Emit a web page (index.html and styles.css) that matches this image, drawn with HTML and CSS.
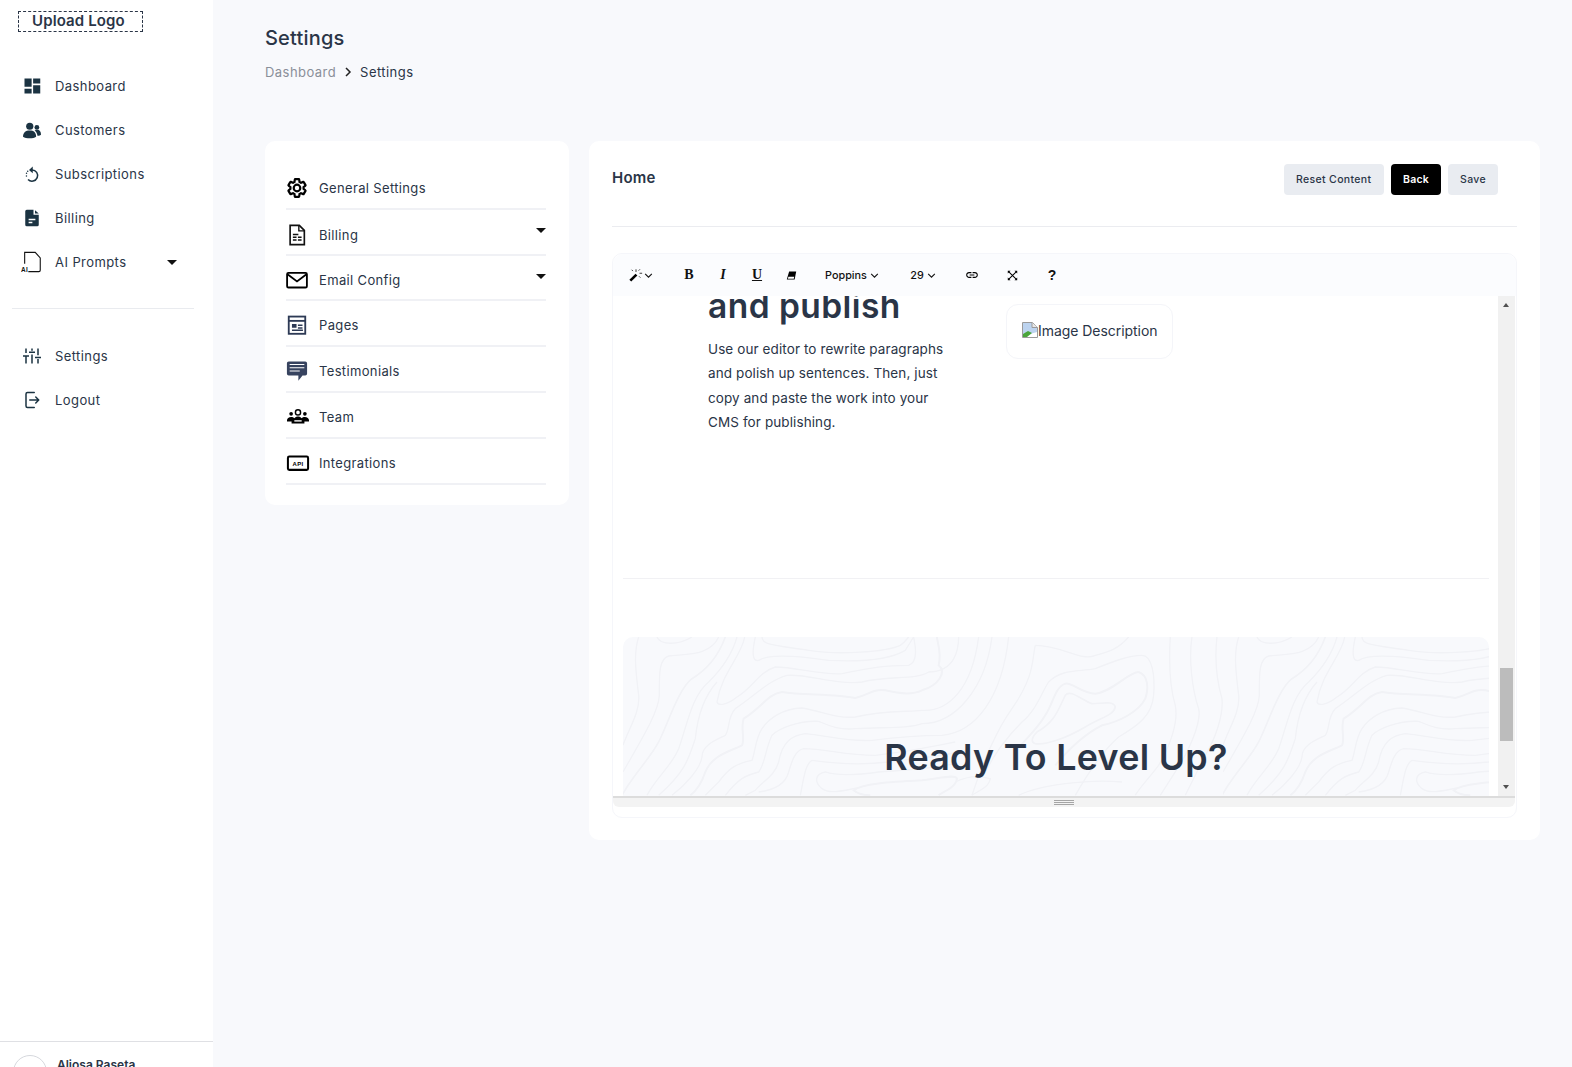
FILE: index.html
```html
<!DOCTYPE html>
<html lang="en">
<head>
<meta charset="utf-8">
<title>Settings</title>
<link rel="stylesheet" href="styles.css">
</head>
<body>
<div class="app">
  <aside class="sidebar">
    <div class="logo">Upload Logo</div>
    <nav class="nav">
      <a class="nav-item"><svg class="nav-icon" viewBox="0 0 24 24"><path fill="#1b3342" d="M2 13h9.500V2H2zm0 9h9.500v-6.500H2zm11.500 0H23V11h-9.500zm0-20v6.500H23V2z"/></svg>Dashboard</a>
      <a class="nav-item"><svg class="nav-icon" viewBox="0 0 24 24"><g fill="#1b3342"><circle cx="9" cy="7" r="4.800"/><circle cx="18.500" cy="8.500" r="3.200"/><path d="M0 21c0-6 3.500-8.500 9-8.500s8.500 2.500 8.500 8.500c-2 1.500-5 2-8.500 2s-7-.5-9-2z"/><path d="M15.500 12.600c1-.6 2-.8 3.200-.8 3.500 0 5.300 2.400 5.300 6.200 0 .8-1.500 1.600-4.700 1.800-.4-3-1.600-5.500-3.800-7.200z"/></g></svg>Customers</a>
      <a class="nav-item"><svg class="nav-icon" viewBox="0 0 24 24"><g fill="none" stroke="#1b3342" stroke-width="2"><path d="M12 6.500a7.500 7.500 0 1 1-5.300 12.800"/><path d="M4.700 11l0 .1M4.600 14.500l0 .1M6.300 8.300l0 .1" stroke-linecap="round"/></g><path fill="#1b3342" d="M13 2v9L8 6.500z"/></svg>Subscriptions</a>
      <a class="nav-item"><svg class="nav-icon" viewBox="0 0 24 24"><path fill="#1b3342" fill-rule="evenodd" d="M5 1h9v6.500h7V21a2 2 0 0 1-2 2H5a2 2 0 0 1-2-2V3a2 2 0 0 1 2-2zm11 .5 5 4.500h-5zM7.500 13v2h9v-2zm0 4v2h5v-2z"/></svg>Billing</a>
      <a class="nav-item nav-item-caret"><svg class="nav-icon nav-icon-ai" viewBox="0 0 24 24"><path fill="none" stroke="#111" stroke-width="1.200" d="M4 14V1.500h11.500l5.500 6V21a1.500 1.500 0 0 1-1.500 1.500H8"/><text class="ai-label" x="0" y="23">AI</text></svg>AI Prompts<span class="caret caret-nav"></span></a>
    </nav>
    <div class="nav-divider"></div>
    <nav class="nav">
      <a class="nav-item"><svg class="nav-icon" viewBox="0 0 24 24"><g fill="none" stroke="#1b3342" stroke-width="2"><path d="M4 2v6M4 13v9M12 2v3M12 10v12M20 2v9M20 16v6M0 12h8M8 7h8M16 14h8"/></g></svg>Settings</a>
      <a class="nav-item"><svg class="nav-icon" viewBox="0 0 24 24"><g fill="none" stroke="#1b3342" stroke-width="2" stroke-linecap="round" stroke-linejoin="round"><path d="M15 2H6a2 2 0 0 0-2 2v16a2 2 0 0 0 2 2h9"/><path d="M9 12h12M17 8l4 4-4 4"/></g></svg>Logout</a>
    </nav>
    <div class="user">
      <div class="avatar"></div>
      <div class="user-name">Aljosa Raseta</div>
    </div>
  </aside>

  <main class="main">
    <h1 class="page-title">Settings</h1>
    <div class="crumbs"><span class="crumb-muted">Dashboard</span><svg class="crumb-sep" viewBox="0 0 8 10"><path d="M2 1l4 4-4 4" fill="none" stroke="#222" stroke-width="1.500"/></svg><span>Settings</span></div>

    <div class="columns">
      <section class="menu-card">
        <a class="menu-item"><svg class="menu-icon" viewBox="0 0 24 24"><path fill="none" stroke="#000" stroke-width="2.400" d="M19.140 12.940c.04-.3.06-.61.06-.94 0-.32-.02-.64-.07-.94l2.030-1.580c.18-.14.23-.41.12-.61l-1.920-3.320c-.12-.22-.37-.29-.59-.22l-2.390.96c-.5-.38-1.030-.7-1.620-.94l-.36-2.540c-.04-.24-.24-.41-.48-.41h-3.840c-.24 0-.43.17-.47.41l-.36 2.540c-.59.24-1.130.57-1.620.94l-2.390-.96c-.22-.08-.47 0-.59.22L2.740 8.870c-.12.21-.08.47.12.61l2.030 1.580c-.05.3-.09.63-.09.94s.02.64.07.94l-2.030 1.580c-.18.14-.23.41-.12.61l1.920 3.320c.12.22.37.29.59.22l2.390-.96c.5.38 1.030.7 1.620.94l.36 2.540c.05.24.24.41.48.41h3.840c.24 0 .44-.17.47-.41l.36-2.540c.59-.24 1.130-.56 1.620-.94l2.390.96c.22.08.47 0 .59-.22l1.920-3.320c.12-.22.07-.47-.12-.61l-2.010-1.580zM12 15.600c-1.980 0-3.600-1.620-3.600-3.600s1.620-3.600 3.600-3.600 3.600 1.620 3.600 3.600-1.620 3.600-3.600 3.600z"/></svg>General Settings</a>
        <a class="menu-item menu-item-drop"><svg class="menu-icon" viewBox="0 0 24 24"><path fill="none" stroke="#111" stroke-width="1.800" d="M4.500 1.500h10l5.500 5.500v15.500H4.500z"/><path fill="none" stroke="#111" stroke-width="1.500" d="M14 1.500V7.500h6M7.500 11.500h6M7.500 14.500h4M13 14.500h4M7.500 17.500h4M13 17.500h4"/></svg>Billing<span class="caret caret-menu"></span></a>
        <a class="menu-item menu-item-drop"><svg class="menu-icon" viewBox="0 0 24 24"><rect x="1.200" y="4.200" width="21.600" height="16" rx="1.500" fill="none" stroke="#000" stroke-width="2"/><path d="M2 6l10 7.500L22 6" fill="none" stroke="#000" stroke-width="2"/></svg>Email Config<span class="caret caret-menu"></span></a>
        <a class="menu-item"><svg class="menu-icon" viewBox="0 0 24 24"><rect x="3" y="2.800" width="18" height="18.800" fill="none" stroke="#2d3a55" stroke-width="2"/><path fill="none" stroke="#2d3a55" stroke-width="2" d="M3 7.500h18"/><path fill="#2d3a55" d="M6.500 11h5v4h-5zM13 11.500h5v1.500h-5zM6.500 17h12v1.500h-12zM13 14.500h5V16h-5z"/></svg>Pages</a>
        <a class="menu-item"><svg class="menu-icon" viewBox="0 0 24 24"><path fill="#37435f" d="M3 1.500h18a2 2 0 0 1 2 2V15a2 2 0 0 1-2 2h-3l-4.500 5.500V17H3a2 2 0 0 1-2-2V3.500a2 2 0 0 1 2-2z"/><path stroke="#fff" stroke-width="1.100" d="M4 5h16M4 8.500h16M4 12h11"/></svg>Testimonials</a>
        <a class="menu-item"><svg class="menu-icon menu-icon-wide" viewBox="0 0 24 24"><g fill="#000"><circle cx="12" cy="7" r="2.800" fill="none" stroke="#000" stroke-width="1.600"/><circle cx="4.500" cy="8.500" r="2"/><circle cx="19.500" cy="8.500" r="2"/><path d="M0 15.500c0-2 2-3.500 4.500-3.500 1.500 0 2.800.5 3.500 1.300C9 12 10.500 11.500 12 11.500s3 .5 4 1.800c.7-.8 2-1.300 3.500-1.300 2.500 0 4.500 1.500 4.500 3.500v1.500h-5V19H5v-2H0z"/></g><path fill="#fff" d="M8 15.500h8V17H8z"/></svg>Team</a>
        <a class="menu-item"><svg class="menu-icon menu-icon-wide" viewBox="0 0 24 24"><rect x="1" y="5" width="22" height="14.500" rx="1.500" fill="none" stroke="#000" stroke-width="2.200"/><text class="api-label" x="12" y="14.800">API</text></svg>Integrations</a>
      </section>

      <section class="content-card">
        <header class="content-head">
          <h2 class="content-title">Home</h2>
          <div class="actions">
            <button class="btn btn-wide">Reset Content</button>
            <button class="btn btn-dark">Back</button>
            <button class="btn">Save</button>
          </div>
        </header>

        <div class="editor">
          <div class="toolbar">
            <span class="tool tool-magic"><svg class="tool-svg" viewBox="0 0 16 16"><path d="M1.500 14.500 8.500 7.500" stroke="#000" stroke-width="3" fill="none"/><path d="M8 1.500v3M12 6h3M11 3l1.500-1.500M11.500 9.500l1.500 1.500M4.500 3.500 3 2" stroke="#222" fill="none"/></svg><svg class="chev chev-near" viewBox="0 0 10 6"><path d="M1 1l4 4 4-4"/></svg></span>
            <span class="tool tool-serif tool-after-gap">B</span>
            <span class="tool tool-serif tool-italic">I</span>
            <span class="tool tool-serif tool-under">U</span>
            <span class="tool"><svg class="tool-svg tool-svg-small" viewBox="0 0 14 14"><path d="M4 2h9l-2 10H1z" fill="#000"/><path d="M3 8.500h7.500l-.6 2.500H2.400z" fill="#fff"/></svg></span>
            <span class="tool tool-font">Poppins<svg class="chev" viewBox="0 0 10 6"><path d="M1 1l4 4 4-4"/></svg></span>
            <span class="tool tool-size">29<svg class="chev" viewBox="0 0 10 6"><path d="M1 1l4 4 4-4"/></svg></span>
            <span class="tool tool-link"><svg class="tool-svg" viewBox="0 0 24 24"><path fill="#000" d="M3.900 12c0-1.710 1.390-3.100 3.100-3.100h4V7H7c-2.760 0-5 2.240-5 5s2.240 5 5 5h4v-1.900H7c-1.710 0-3.100-1.390-3.100-3.100zM8 13h8v-2H8v2zm9-6h-4v1.900h4c1.710 0 3.100 1.390 3.100 3.100s-1.390 3.100-3.100 3.100h-4V17h4c2.760 0 5-2.240 5-5s-2.240-5-5-5z"/></svg></span>
            <span class="tool tool-expand"><svg class="tool-svg tool-svg-small" viewBox="0 0 14 14"><path d="M1 1h3.500L1 4.500zM13 1v3.500L9.500 1zM1 13V9.500L4.500 13zM13 13H9.500L13 9.500z" fill="#000"/><path d="M2 2l10 10M12 2 2 12" stroke="#000" stroke-width="1.300"/></svg></span>
            <span class="tool tool-help">?</span>
          </div>

          <div class="viewport">
            <div class="doc">
              <div class="doc-split">
                <div class="doc-text">
                  <h3 class="doc-heading">and publish</h3>
                  <p class="doc-para">Use our editor to rewrite paragraphs and polish up sentences. Then, just copy and paste the work into your CMS for publishing.</p>
                </div>
                <div class="doc-image">
                  <svg class="broken" viewBox="0 0 16 16"><path d="M.5.5h10l5 5v10H.5z" fill="#fff" stroke="#9a9a9a"/><path d="M1 1h9v5h5v4L1 14z" fill="#bcd3ef"/><path d="M1 15v-3l5-3 4 2-5 4z" fill="#4aa53a"/><path d="M10 .5v5h5.500" fill="#e8e8e8" stroke="#9a9a9a"/></svg>Image Description
                </div>
              </div>
              <hr class="doc-rule">
              <div class="cta">
                <svg class="topo" aria-hidden="true">
                  <defs>
                    <pattern id="topo" width="600" height="200" patternUnits="userSpaceOnUse">
                      <g transform="scale(.3333) translate(-3 -15)" fill="none" stroke="#f1f2f6" stroke-width="4">
                        <path d="M50 15C35 60 40 110 50 190 55 240 20 290 3 340"/>
                        <path d="M105 15C115 40 170 40 210 15"/>
                        <path d="M290 15C265 70 200 65 140 72 110 80 112 130 112 190 110 240 60 320 3 420"/>
                        <path stroke-width="5" d="M310 15C290 70 260 110 210 140 170 170 140 270 110 330 90 370 50 410 15 465L0 490"/>
                        <path d="M345 15C330 70 300 110 260 150 210 190 195 280 170 350 150 400 100 440 75 490"/>
                        <path d="M368 15C360 70 300 120 285 210 290 225 320 215 345 195 390 170 410 120 460 105 520 105 600 130 660 125 720 115 760 100 860 100 890 90 880 40 875 15"/>
                        <path d="M285 150C240 200 225 270 220 320 200 380 190 420 110 490"/>
                        <path stroke-width="6" d="M205 490C225 475 240 450 250 420 270 370 320 360 360 340 370 320 355 290 365 260 420 225 440 185 480 180 540 190 640 185 700 198 740 190 750 170 790 175 830 185 870 190 900 175 950 160 975 120 950 100 960 60 945 30 945 15"/>
                        <path d="M400 15C390 60 390 90 410 85 440 65 520 70 620 85 720 90 800 85 850 55L875 15"/>
                        <path d="M420 15C420 40 460 40 560 55 650 70 790 60 835 40 850 30 855 20 860 15"/>
                        <path d="M150 490C190 460 235 410 240 375 240 340 280 325 310 310 325 290 315 255 340 230 400 190 440 145 495 130 560 125 640 160 720 150 800 130 880 145 920 120 1000 120 1010 50 1010 15"/>
                        <path d="M250 490 290 450C320 410 340 395 390 385 400 360 400 320 420 290 440 260 480 230 540 228 610 240 640 260 700 255 780 235 860 240 900 235 980 240 1050 170 1070 15"/>
                        <path d="M310 490C350 440 370 430 410 420 430 395 430 350 450 310 470 290 530 265 590 268 620 280 650 295 700 290 790 285 860 290 900 275 1000 275 1090 170 1110 15"/>
                        <path d="M370 490 400 475C420 450 460 430 470 390 480 330 510 310 550 305 610 310 680 330 750 325 830 315 900 310 960 310 1060 300 1140 200 1160 15"/>
                        <path d="M410 480C450 475 490 460 500 420 510 385 520 355 545 350 610 350 670 370 760 370 860 360 950 340 1000 330"/>
                        <path d="M535 490C545 440 550 395 570 385 640 395 720 400 800 390 860 380 950 375 1010 360"/>
                        <path d="M720 465C650 480 620 485 600 470 575 450 580 425 610 420 640 430 700 430 770 420 830 415 900 415 1000 395"/>
                        <path stroke-width="6" d="M745 490C730 490 710 488 695 475 720 455 800 450 900 445 950 440 1000 425 1005 440 1000 470 960 480 950 490"/>
                        <path d="M1240 40C1320 40 1380 90 1420 70 1460 60 1490 50 1520 15M1240 40C1230 80 1240 130 1170 230 1120 300 1080 400 1050 490"/>
                        <path d="M1560 70C1590 70 1600 130 1595 190 1590 250 1550 280 1490 315 1450 350 1400 420 1360 490M1560 70C1520 70 1470 90 1420 110 1370 120 1320 110 1280 150 1260 180 1240 240 1200 270 1160 310 1120 360 1090 420"/>
                        <path stroke-width="6" d="M1550 120C1580 130 1580 170 1570 200 1550 240 1490 270 1440 280 1400 300 1350 340 1300 400M1550 120C1520 120 1470 180 1420 185 1380 185 1350 150 1330 155 1300 165 1295 210 1270 250 1240 300 1210 320 1180 360"/>
                        <path stroke-width="5" d="M1480 225C1475 250 1440 255 1390 285 1330 320 1270 340 1240 335 1225 330 1230 315 1245 300 1300 270 1310 230 1330 190 1345 170 1380 205 1410 215 1440 215 1475 205 1480 225z"/>
                        <path d="M1645 15C1640 100 1645 170 1660 220 1670 270 1645 340 1610 400 1580 440 1550 470 1540 490"/>
                        <path d="M1710 15C1700 80 1710 170 1730 230 1740 270 1700 360 1660 420L1615 490"/>
                        <path d="M1785 15C1780 60 1780 130 1800 200 1805 250 1780 320 1750 370L1690 490"/>
                        <path d="M1000 450C1060 420 1100 440 1105 440 1100 470 1060 480 1050 490M1190 490C1250 460 1400 440 1500 450"/>
                      </g>
                    </pattern>
                  </defs>
                  <rect width="100%" height="100%" fill="url(#topo)"/>
                </svg>
                <h2 class="cta-title">Ready To Level Up?</h2>
              </div>
            </div>
            <div class="scrollbar">
              <span class="arrow arrow-up"></span>
              <span class="thumb"></span>
              <span class="arrow arrow-down"></span>
            </div>
          </div>
          <div class="resizer"><span class="grip"></span></div>
        </div>
      </section>
    </div>
  </main>
</div>
</body>
</html>
```

FILE: styles.css
```css
* { box-sizing: border-box; }
html, body { margin: 0; height: 100%; overflow: hidden; }
body {
  font-family: Inter, "Noto Sans", "Liberation Sans", sans-serif;
  color: #2a3547;
  background: #f8f9fc;
  font-size: 13px;
}
.app { display: flex; align-items: flex-start; }

/* Sidebar */
.sidebar {
  width: 213px;
  height: 1101px;
  flex: none;
  background: #fff;
  display: flex;
  flex-direction: column;
  padding-top: 11px;
}
.logo {
  width: 125px;
  height: 21px;
  margin-left: 18px;
  padding-left: 13px;
  border: 1px dashed #2a3547;
  font-size: 15px;
  font-weight: 600;
  line-height: 18px;
  letter-spacing: .12px;
  margin-bottom: 32px;
}
.nav { display: flex; flex-direction: column; }
.nav-item {
  display: flex;
  align-items: center;
  height: 44px;
  padding-left: 24px;
  font-size: 13px;
  letter-spacing: .42px;
}
.nav-icon { width: 18px; height: 18px; margin-right: 14px; flex: none; margin-left: -1px; }
.nav-icon-ai { width: 22px; height: 22px; margin-right: 12px; margin-left: -3px; }
.ai-label { font: 700 7px "Liberation Sans", sans-serif; fill: #111; }
.caret { width: 0; height: 0; border-left: 5.500px solid transparent; border-right: 5.500px solid transparent; border-top: 5.500px solid #111; }
.caret-nav { margin-left: 41px; }
.nav-divider { height: 1px; background: #e9ebef; margin: 24px 19px 25px 12px; }
.user {
  margin-top: auto;
  height: 60px;
  flex: none;
  border-top: 1px solid #dfe0e4;
  display: flex;
  padding: 13px 0 0 13px;
  gap: 10px;
}
.avatar { width: 34px; height: 34px; border-radius: 50%; border: 1px solid #d6d8dd; }
.user-name { font-size: 12px; font-weight: 600; line-height: 15px; padding-top: 2px; }

/* Main */
.main { flex: 1; padding: 25px 32px 0 52px; min-width: 0; }
.page-title { margin: 0; font-size: 20px; font-weight: 500; line-height: 26px; letter-spacing: .2px; }
.crumbs { display: flex; align-items: center; margin-top: 9px; font-size: 13px; line-height: 24px; letter-spacing: .45px; }
.crumb-muted { color: #8a8f99; }
.crumb-sep { width: 8px; height: 10px; margin: 0 8px; }
.columns { display: flex; align-items: flex-start; gap: 20px; margin-top: 57px; }

.menu-card {
  width: 304px;
  height: 364px;
  flex: none;
  background: #fff;
  border-radius: 10px;
  padding: 23px 23px 0 21px;
}
.menu-item {
  display: flex;
  align-items: center;
  position: relative;
  height: 45.800px;
  padding-top: 4px;
  border-bottom: 2px solid #f0f1f5;
  font-size: 13px;
  letter-spacing: .35px;
}
.menu-item-drop { padding-top: 6px; }
.menu-icon { width: 22px; height: 22px; margin-right: 11px; flex: none; }
.menu-icon-wide { width: 24px; margin-right: 9px; }
.caret-menu { position: absolute; right: 0; top: 18px; }

.content-card {
  width: 951px;
  height: 699px;
  flex: none;
  background: #fff;
  border-radius: 10px;
  padding: 0 23px;
}
.content-head {
  height: 86px;
  border-bottom: 1px solid #ebecf0;
  display: flex;
  align-items: flex-start;
  justify-content: space-between;
  padding: 23px 19px 0 0;
}
.content-title { margin: 4px 0 0; font-size: 15px; font-weight: 600; line-height: 20px; letter-spacing: .2px; }
.actions { display: flex; gap: 7px; }
.btn {
  height: 31px;
  padding: 0 12px;
  border: 0;
  border-radius: 4px;
  background: #e9ecf1;
  color: #2a3547;
  font: 500 10.500px/29px Inter, sans-serif;
  letter-spacing: .35px;
}
.btn-wide { padding: 0 12.500px; }
.btn-dark { background: #000; color: #fff; font-weight: 600; letter-spacing: .25px; }

.editor {
  margin-top: 26px;
  height: 565px;
  width: 905px;
  border: 1px solid #f5f6fa;
  border-radius: 10px;
  padding: 0 1px 10px 0;
}
.toolbar {
  height: 42px;
  display: flex;
  align-items: center;
  background: #fbfcfe;
  border-radius: 10px 10px 0 0;
  margin-right: -1px;
  padding-left: 9px;
  font: 500 10.800px Inter, sans-serif;
  color: #111;
}
.tool { display: flex; align-items: center; justify-content: center; width: 34px; height: 34px; }
.tool-svg { width: 14px; height: 14px; }
.tool-svg-small { width: 11px; height: 11px; }
.tool-magic { width: 34px; padding-left: 3px; }
.chev { width: 9px; height: 5px; margin-left: 3px; flex: none; }
.chev-near { margin-left: 1px; }
.chev path { fill: none; stroke: #111; stroke-width: 1.300; }
.tool-serif { font: 700 14px "Liberation Serif", serif; color: #111; }
.tool-italic { font-style: italic; }
.tool-under { text-decoration: underline; }
.tool-after-gap { margin-left: 16px; }
.tool-font { width: 70px; margin-left: 8px; padding-left: 2px; }
.tool-size { width: 48px; margin-left: 13px; }
.tool-link { margin-left: 8px; }
.tool-expand, .tool-help { margin-left: 6px; }
.tool-help { font: 700 14px "Liberation Sans", sans-serif; }

.viewport { display: flex; height: 500px; }
.doc { flex: 1; min-width: 0; overflow: hidden; padding: 0 9px 0 10px; }
.doc-split { display: flex; height: 292px; margin-top: -10px; padding-left: 85px; }
.doc-text { width: 298px; flex: none; }
.doc-heading { margin: 0; font-size: 33.500px; line-height: 40px; font-weight: 600; letter-spacing: .45px; color: #2a3547; }
.doc-para { margin: 11px 0 0; width: 255px; font-size: 13.500px; line-height: 24.300px; letter-spacing: .1px; }
.doc-image {
  width: 167px;
  height: 55px;
  margin-top: 18px;
  padding: 14px 0 0 15px;
  border: 1px solid #f4f5f9;
  border-radius: 12px;
  font-size: 14px;
  letter-spacing: -.05px;
  line-height: 24px;
  display: block;
}
.broken { width: 16px; height: 16px; vertical-align: -2px; }
.doc-rule { margin: 0; border: 0; border-top: 1px solid #f1f1f4; }
.cta {
  position: relative;
  height: 200px;
  margin-top: 58px;
  background: #f8f9fc;
  border-radius: 10px 10px 0 0;
  overflow: hidden;
}
.topo { position: absolute; inset: 0; width: 100%; height: 100%; }
.api-label { font: 700 6.500px "Liberation Sans", sans-serif; text-anchor: middle; fill: #000; }
.cta-title {
  position: relative;
  margin: 0;
  padding-top: 97px;
  text-align: center;
  font-size: 35.800px;
  line-height: 46px;
  font-weight: 600;
  letter-spacing: .3px;
}
.scrollbar {
  width: 17px;
  flex: none;
  background: #f1f1f1;
  position: relative;
}
.thumb { position: absolute; top: 372px; left: 2px; width: 13px; height: 73px; background: #bcbcbc; }
.arrow { position: absolute; left: 5px; width: 0; height: 0; border-left: 3.500px solid transparent; border-right: 3.500px solid transparent; }
.arrow-up { top: 7px; border-bottom: 4px solid #505050; }
.arrow-down { bottom: 7px; border-top: 4px solid #505050; }
.resizer {
  height: 11px;
  background: #f3f3f3;
  border-top: 2px solid #dcdcdc;
  border-radius: 0 0 6px 6px;
  display: flex;
  justify-content: center;
  padding: 2px 0 0;
}
.grip { width: 20px; height: 5px; border-top: 1px solid #a5a5a5; border-bottom: 1px solid #a5a5a5; position: relative; }
.grip::after { content: ""; position: absolute; left: 0; right: 0; top: 1px; border-top: 1px solid #a5a5a5; }
```
